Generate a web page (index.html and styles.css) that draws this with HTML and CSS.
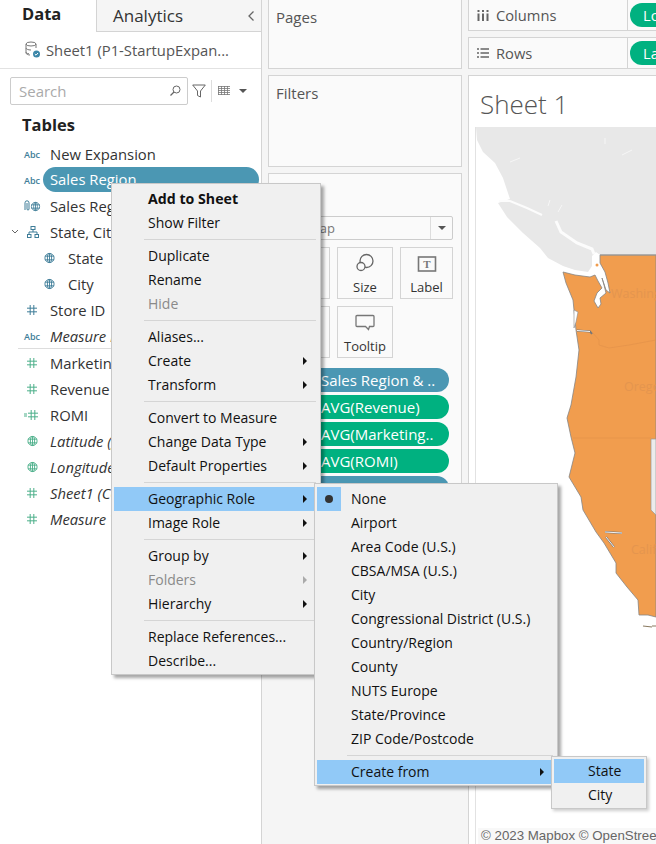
FILE: index.html
```html
<!DOCTYPE html>
<html lang="en">
<head>
<meta charset="utf-8">
<title>Sheet 1</title>
<link rel="stylesheet" href="styles.css">
</head>
<body>
<svg class="defs" width="0" height="0" aria-hidden="true">
  <symbol id="globe" viewBox="0 0 12 12"><g fill="none" stroke="currentColor" stroke-width="1"><circle cx="6" cy="6" r="5"/><ellipse cx="6" cy="6" rx="2.300" ry="5"/><path d="M1 4h10M1 8h10M6 1v10"/></g></symbol>
  <symbol id="hash" viewBox="0 0 11 11"><path d="M3.500 0v11M7.500 0v11M0 3.500h11M0 7.500h11" fill="none" stroke="currentColor" stroke-width="1.100"/></symbol>
</svg>
<div class="app">
  <aside class="data-pane">
    <div class="tabs"><div class="tab-data">Data</div><div class="tab-analytics"><span>Analytics</span><svg class="chev" width="8" height="12" viewBox="0 0 8 12"><path d="M6.500 1.500 2 6l4.500 4.500" fill="none" stroke="#666" stroke-width="1.300"/></svg></div></div>
    <div class="source">
      <svg width="17" height="18" viewBox="0 0 17 18"><g fill="none" stroke="#777" stroke-width="1"><ellipse cx="7" cy="3" rx="5" ry="2"/><path d="M2 3v9c0 1 2 2 4 2M12 3v4M2 7c0 1 2 2 5 2M2 11c0 1 1 1.500 3 1.800"/></g><circle cx="12.500" cy="13" r="3.500" fill="#3b86a8"/><path d="m10.800 13 1.200 1.200 2-2.200" fill="none" stroke="#fff"/></svg>
      <span>Sheet1 (P1-StartupExpan...</span>
    </div>
    <div class="tools">
      <div class="search"><span>Search</span><svg width="12" height="12" viewBox="0 0 12 12"><circle cx="7.500" cy="4.500" r="3.500" fill="none" stroke="#666"/><path d="M5 7 1.500 10.500" stroke="#666" stroke-width="1.300"/></svg></div>
      <svg class="funnel" width="14" height="14" viewBox="0 0 14 14"><path d="M.7 1h12.600L8.500 7v6L5.500 11.500V7z" fill="none" stroke="#666"/></svg>
      <i class="tool-sep"></i>
      <svg class="grid-ico" width="12" height="9" viewBox="0 0 12 9"><path d="M0 .5h12M0 2.500h12M0 4.500h12M0 6.500h12M0 8.500h12M.5 0v9M3.500 0v9M6.500 0v9M9.500 0v9" stroke="#777" stroke-width=".8" fill="none"/></svg>
      <i class="tri-down"></i>
    </div>
    <h2 class="tables">Tables</h2>
    <ul class="fields">
      <li><b class="abc blue">Abc</b><span>New Expansion</span></li>
      <li class="picked"><b class="abc blue">Abc</b><span class="pill-field">Sales Region</span></li>
      <li><svg class="ico blue wide" width="17" height="12" viewBox="0 0 17 12"><path d="M1 10V2.800a2 2 0 0 1 4 0V9a1 1 0 0 1-2 0V3" fill="none" stroke="currentColor"/><use href="#globe" x="6.500" y="1.500" width="10" height="10"/></svg><span>Sales Region (group)</span></li>
      <li><svg class="caret" width="8" height="6" viewBox="0 0 8 6"><path d="m1 1 3 3 3-3" fill="none" stroke="#666"/></svg><svg class="ico blue" width="12" height="12" viewBox="0 0 12 12"><g fill="none" stroke="currentColor"><rect x="4" y=".5" width="4" height="3"/><rect x=".5" y="8.500" width="3.500" height="3"/><rect x="8" y="8.500" width="3.500" height="3"/><path d="M6 3.500V6M2 8.500V6h8v2.500"/></g></svg><span>State, City</span></li>
      <li class="sub"><svg class="ico blue" width="11" height="11"><use href="#globe" width="11" height="11"/></svg><span>State</span></li>
      <li class="sub"><svg class="ico blue" width="11" height="11"><use href="#globe" width="11" height="11"/></svg><span>City</span></li>
      <li><svg class="ico blue" width="10" height="10"><use href="#hash" width="10" height="10"/></svg><span>Store ID</span></li>
      <li class="rule"><b class="abc blue">Abc</b><em>Measure Names</em></li>
      <li><svg class="ico green" width="10" height="10"><use href="#hash" width="10" height="10"/></svg><span>Marketing</span></li>
      <li><svg class="ico green" width="10" height="10"><use href="#hash" width="10" height="10"/></svg><span>Revenue</span></li>
      <li><svg class="ico green wide" width="14" height="10" viewBox="0 0 14 10"><path d="M0 4h3M0 6h3" stroke="currentColor"/><use href="#hash" x="4" width="10" height="10"/></svg><span>ROMI</span></li>
      <li><svg class="ico green" width="11" height="11"><use href="#globe" width="11" height="11"/></svg><em>Latitude (generated)</em></li>
      <li><svg class="ico green" width="11" height="11"><use href="#globe" width="11" height="11"/></svg><em>Longitude (generated)</em></li>
      <li><svg class="ico green" width="10" height="10"><use href="#hash" width="10" height="10"/></svg><em>Sheet1 (Count)</em></li>
      <li><svg class="ico green" width="10" height="10"><use href="#hash" width="10" height="10"/></svg><em>Measure Values</em></li>
    </ul>
  </aside>

  <section class="cards">
    <div class="card pages">Pages</div>
    <div class="card filters">Filters</div>
    <div class="card marks">
      <div class="mark-type"><span>Map</span><i class="select-arrow"><i class="tri-down"></i></i></div>
      <div class="mark-grid">
        <div class="mark-btn"></div>
        <div class="mark-btn"><svg width="20" height="20" viewBox="0 0 20 20"><g fill="none" stroke="#666" stroke-width="1.300"><circle cx="11.500" cy="8" r="6.500"/><circle cx="6" cy="13.500" r="4" fill="#fafafa"/></g></svg><span>Size</span></div>
        <div class="mark-btn"><svg width="20" height="18" viewBox="0 0 20 18"><rect x="1.500" y="2" width="17" height="14" fill="none" stroke="#777" stroke-width="1.600"/><text x="10" y="13" class="t-glyph">T</text></svg><span>Label</span></div>
        <div class="mark-btn"></div>
        <div class="mark-btn"><svg width="20" height="18" viewBox="0 0 20 18"><path d="M2 1.500h16a1 1 0 0 1 1 1v9a1 1 0 0 1-1 1h-3.500l-1 3-3-3H2a1 1 0 0 1-1-1v-9a1 1 0 0 1 1-1z" fill="none" stroke="#777" stroke-width="1.300"/></svg><span>Tooltip</span></div>
      </div>
      <div class="mark-pills">
        <div class="m-pill blue-bg">Sales Region &amp; ..</div>
        <div class="m-pill green-bg">AVG(Revenue)</div>
        <div class="m-pill green-bg">AVG(Marketing..</div>
        <div class="m-pill green-bg">AVG(ROMI)</div>
        <div class="m-pill blue-bg"></div>
      </div>
    </div>
  </section>

  <main class="viz">
    <div class="shelf"><svg width="12" height="11" viewBox="0 0 12 11"><path d="M1.500 3.500V11M6 3.500V11M10.500 3.500V11M1.500 0v2M6 0v2M10.500 0v2" stroke="#666" stroke-width="2"/></svg><span class="shelf-name">Columns</span><i class="shelf-div"></i><span class="s-pill">Lo</span></div>
    <div class="shelf"><svg width="12" height="10" viewBox="0 0 12 10"><path d="M0 1h2M0 5h2M0 9h2M3.500 1H12M3.500 5H12M3.500 9H12" stroke="#666" stroke-width="1.600"/></svg><span class="shelf-name">Rows</span><i class="shelf-div"></i><span class="s-pill">La</span></div>
    <div class="sheet">
      <h1>Sheet 1</h1>
      <div class="map">
        <svg class="map-svg" width="180" height="706" viewBox="476 127 180 706">
          <path d="M476 127H656V255H600L596 252 592 256 592 266 588 272 575 270 563 266 548 258 540 248 523 233 507 217 498 203 510 199 503 178 495 163 483 152 477 140z" fill="#e8e8e8"/>
          <path d="M499 201 510 201 527 208 542 215" fill="none" stroke="#fcfcfc" stroke-width="2"/>
          <path d="M556 221 561 232 577 243 592 249 594 254" fill="none" stroke="#fcfcfc" stroke-width="3"/>
          <path d="M510 162 520 158M548 206 550 200M558 212 562 205M622 155 632 150M605 138V144" fill="none" stroke="#f6f6f6" stroke-width="1"/>
          <path d="M600 255H656V617L648 615 639 615 638 600 627 587 616 573 616 563 604 543 596 532 583 510 581 497 569 477 575 453 571 437 567 418 571 405 576 377 579 350 576 330 573 300 566 283 563 272 575 275 590 277 595 275 598 281 602 288 597 293 594 301 598 308 601 304 600 298 606 293 604 285 602 278 606 290 610 293 608 283 605 272 600 263z" fill="#f19d4e" stroke="#858585" stroke-width=".8"/>
          <path d="M600 255H656" stroke="#9a9a9a" stroke-width="1" fill="none"/>
          <circle cx="597" cy="265" r="1.500" fill="#f19d4e"/>
          <path d="M574 310 578 312 576 322 574 328z" fill="#fff" stroke="#8a8a8a" stroke-width=".6"/>
          <path d="M577 330.500 590 331.500 592 334" fill="none" stroke="#777" stroke-width="2"/>
          <path d="M577 330.500 590 331.500" fill="none" stroke="#fff" stroke-width=".9"/>
          <path d="M592 332 599 340 599 345 609 348 629 345 656 340M573 438H651" fill="none" stroke="#e0914a" stroke-width=".6"/>
          <path d="M605 532 622 533M606 537 614 547" fill="none" stroke="#777" stroke-width="2"/>
          <path d="M605 532 622 533M606 537 614 547" fill="none" stroke="#fff" stroke-width=".9"/>
          <path d="M643 626 652 627M656 626H652" stroke="#8a7a60" stroke-width="1.200"/>
          <path d="M656 439H651V510L656 515z" fill="#ececec" stroke="#9a9a9a" stroke-width=".7"/>
          <text x="611" y="298" class="state">Washing</text>
          <text x="624" y="391" class="state">Oregon</text>
          <text x="631" y="554" class="state">Calif</text>
        </svg>
      </div>
      <div class="attrib">© 2023 Mapbox © OpenStreetMap</div>
    </div>
  </main>

  <nav class="menu main-menu">
    <div class="mi bold">Add to Sheet</div>
    <div class="mi">Show Filter</div>
    <hr>
    <div class="mi">Duplicate</div>
    <div class="mi">Rename</div>
    <div class="mi off">Hide</div>
    <hr>
    <div class="mi">Aliases...</div>
    <div class="mi arrow">Create</div>
    <div class="mi arrow">Transform</div>
    <hr>
    <div class="mi">Convert to Measure</div>
    <div class="mi arrow">Change Data Type</div>
    <div class="mi arrow">Default Properties</div>
    <hr>
    <div class="mi arrow on">Geographic Role</div>
    <div class="mi arrow">Image Role</div>
    <hr>
    <div class="mi arrow">Group by</div>
    <div class="mi arrow off">Folders</div>
    <div class="mi arrow">Hierarchy</div>
    <hr>
    <div class="mi">Replace References...</div>
    <div class="mi">Describe...</div>
  </nav>

  <nav class="menu geo-menu">
    <div class="mi checked">None</div>
    <div class="mi">Airport</div>
    <div class="mi">Area Code (U.S.)</div>
    <div class="mi">CBSA/MSA (U.S.)</div>
    <div class="mi">City</div>
    <div class="mi">Congressional District (U.S.)</div>
    <div class="mi">Country/Region</div>
    <div class="mi">County</div>
    <div class="mi">NUTS Europe</div>
    <div class="mi">State/Province</div>
    <div class="mi">ZIP Code/Postcode</div>
    <hr>
    <div class="mi arrow on">Create from</div>
  </nav>

  <nav class="menu from-menu">
    <div class="mi on">State</div>
    <div class="mi">City</div>
  </nav>
</div>
</body>
</html>
```

FILE: styles.css
```css
* { box-sizing: border-box; }
html, body { margin: 0; padding: 0; }
body { width: 656px; height: 844px; overflow: hidden; background: #f5f5f5; font-family: "Open Sans", "Noto Sans", sans-serif; font-size: 14px; color: #333; }
.defs { position: absolute; }
.app { position: relative; width: 656px; height: 844px; overflow: hidden; display: grid; grid-template-columns: 262px 206px 188px; }

.data-pane { background: #fff; border-right: 1px solid #d4d4d4; }
.tabs { display: flex; height: 32px; }
.tab-data { width: 97px; padding: 2px 0 0 22px; font-weight: 700; font-size: 16.500px; color: #222; border-right: 1px solid #d4d4d4; }
.tab-analytics { flex: 1; display: flex; justify-content: space-between; align-items: center; padding: 0 6px 0 16px; background: #f5f5f5; border-bottom: 1px solid #d4d4d4; font-size: 17px; color: #333; }
.source { height: 37px; display: flex; align-items: center; gap: 5px; padding-left: 24px; color: #555; border-bottom: 1px solid #e2e2e2; font-size: 14.800px; }
.tools { display: flex; align-items: center; height: 40px; padding: 3px 0 0 10px; }
.search { width: 178px; height: 28px; border: 1px solid #ccc; border-radius: 2px; display: flex; align-items: center; justify-content: space-between; padding: 0 6px 0 8px; color: #aaa; font-size: 15px; }
.funnel { margin-left: 4px; }
.tool-sep { width: 1px; height: 22px; background: #ddd; margin: 0 6px 0 5px; }
.tri-down { display: inline-block; width: 0; height: 0; border: 4px solid transparent; border-top: 4px solid #555; border-bottom: 0; }
.tools .tri-down { margin-left: 9px; }
.tables { margin: 0; height: 28px; padding: 5px 0 0 22px; font-size: 16.500px; font-weight: 700; color: #222; line-height: 22px; }
.fields { list-style: none; margin: 4px 0 0; padding: 0; font-size: 14.800px; }
.fields li { position: relative; height: 26px; display: flex; align-items: center; padding-left: 50px; white-space: nowrap; color: #333; }
.fields em { font-style: italic; }
.fields li.sub { padding-left: 68px; }
.fields li.rule::after { content: ""; position: absolute; left: 18px; right: 0; bottom: 0; height: 1px; background: #ddd; }
.fields li.rule + li { margin-top: 1px; }
.abc, .ico, .caret { position: absolute; }
.abc { left: 24px; font-size: 9px; font-weight: 600; }
.ico { left: 27px; top: 50%; transform: translateY(-50%); }
.ico.wide { left: 24px; }
.sub .ico { left: 44px; }
.caret { left: 11px; top: 10px; }
.blue { color: #3e7d98; }
.green { color: #4caf8a; }
.picked .pill-field { position: absolute; left: 43px; right: 2px; top: 0; height: 25px; border-radius: 13px; background: #4b97b3; color: #fff; line-height: 25px; padding-left: 7px; }

.cards { display: flex; flex-direction: column; gap: 6px; padding: 0 6px; }
.card { background: #fafafa; border: 1px solid #d4d4d4; color: #555; padding: 7px 7px; font-size: 15px; }
.pages { height: 70px; margin-top: -1px; }
.filters { height: 92px; }
.marks { height: 490px; position: relative; padding: 42px 8px 0 5px; }
.mark-type { height: 24px; border: 1px solid #ccc; border-radius: 2px; display: flex; justify-content: space-between; align-items: center; padding-left: 33px; font-size: 13px; color: #777; }
.select-arrow { width: 22px; height: 22px; border-left: 1px solid #ddd; display: flex; align-items: center; justify-content: center; }
.mark-grid { margin-top: 7px; display: grid; grid-template-columns: 56px 56px 53px; grid-auto-rows: 52px; gap: 7px; }
.mark-btn { border: 1px solid #d4d4d4; display: flex; flex-direction: column; align-items: center; justify-content: flex-end; gap: 5px; padding-bottom: 2px; color: #333; font-size: 13px; }
.mark-pills { margin: 10px 4px 0 0; display: flex; flex-direction: column; gap: 3px; font-size: 15px; }
.m-pill { height: 24px; border-radius: 12px; color: #fff; line-height: 24px; padding-left: 47px; white-space: nowrap; }
.blue-bg { background: #4b97b3; }
.green-bg { background: #00b180; }
.t-glyph { font-family: "Liberation Serif", serif; font-size: 11px; font-weight: 700; text-anchor: middle; fill: #777; }

.viz { display: flex; flex-direction: column; gap: 6px; min-width: 0; }
.shelf { height: 32px; background: #fafafa; border: 1px solid #d4d4d4; border-right: 0; display: flex; align-items: center; padding-left: 8px; color: #555; overflow: hidden; font-size: 14.700px; flex: none; }
.shelf svg { flex: none; }
.shelf:first-child { margin-top: -1px; }
.shelf-name { margin-left: 7px; width: 131px; flex: none; }
.shelf-div { width: 1px; align-self: stretch; background: #d4d4d4; flex: none; }
.s-pill { margin-left: 2px; background: #00b180; color: #fff; height: 24px; width: 40px; border-radius: 12px 0 0 12px; padding-left: 13px; line-height: 24px; flex: none; }
.sheet { flex: 1; background: #fff; border: 1px solid #d4d4d4; border-right: 0; border-bottom: 0; position: relative; display: flex; flex-direction: column; min-height: 0; }
.sheet h1 { margin: 0; height: 51px; padding: 11px 0 0 11px; font-size: 26px; font-weight: 300; color: #555; line-height: 34px; flex: none; }
.map { flex: 1; margin-left: 6px; border-left: 1px solid #e2e2e2; overflow: hidden; min-height: 0; }
.map-svg { display: block; }
.state { font-family: "Open Sans", sans-serif; font-size: 12.500px; fill: #e4954e; }
.attrib { position: absolute; left: 9px; bottom: 0; background: #f8f8f8; font-family: "Liberation Sans", sans-serif; font-size: 13.300px; color: #666; white-space: nowrap; height: 16px; line-height: 16px; padding-left: 3px; }

.menu { position: absolute; background: #f0f0f0; border: 1px solid #c8c8c8; box-shadow: 3px 3px 3px rgba(0,0,0,.35); padding: 3px 2px 1px; color: #111; white-space: nowrap; }
.menu hr { border: 0; height: 1px; background: #d5d5d5; margin: 4px 2px 4px 30px; }
.mi { height: 24px; line-height: 24px; padding-left: 34px; position: relative; }
.mi.bold { font-weight: 700; font-size: 14.200px; }
.mi.off { color: #8a8a8a; }
.mi.on { background: #91c9f7; }
.mi.arrow::after { content: ""; position: absolute; right: 11px; top: 8px; border: 4px solid transparent; border-left: 4px solid #111; border-right: 0; }
.mi.off.arrow::after { border-left-color: #aaa; }
.main-menu { left: 111px; top: 183px; width: 210px; }
.geo-menu { left: 314px; top: 483px; width: 244px; }
.checked::before { content: ""; position: absolute; left: 0; top: 0; width: 24px; height: 24px; background: #91c9f7; }
.checked::after { content: ""; position: absolute; left: 8px; top: 8px; width: 8px; height: 8px; border-radius: 50%; background: #333; }
.from-menu { left: 551px; top: 756px; width: 96px; padding-top: 2px; box-shadow: 2px 2px 3px rgba(0,0,0,.2); }
.from-menu .mi { padding-left: 34px; }
```
